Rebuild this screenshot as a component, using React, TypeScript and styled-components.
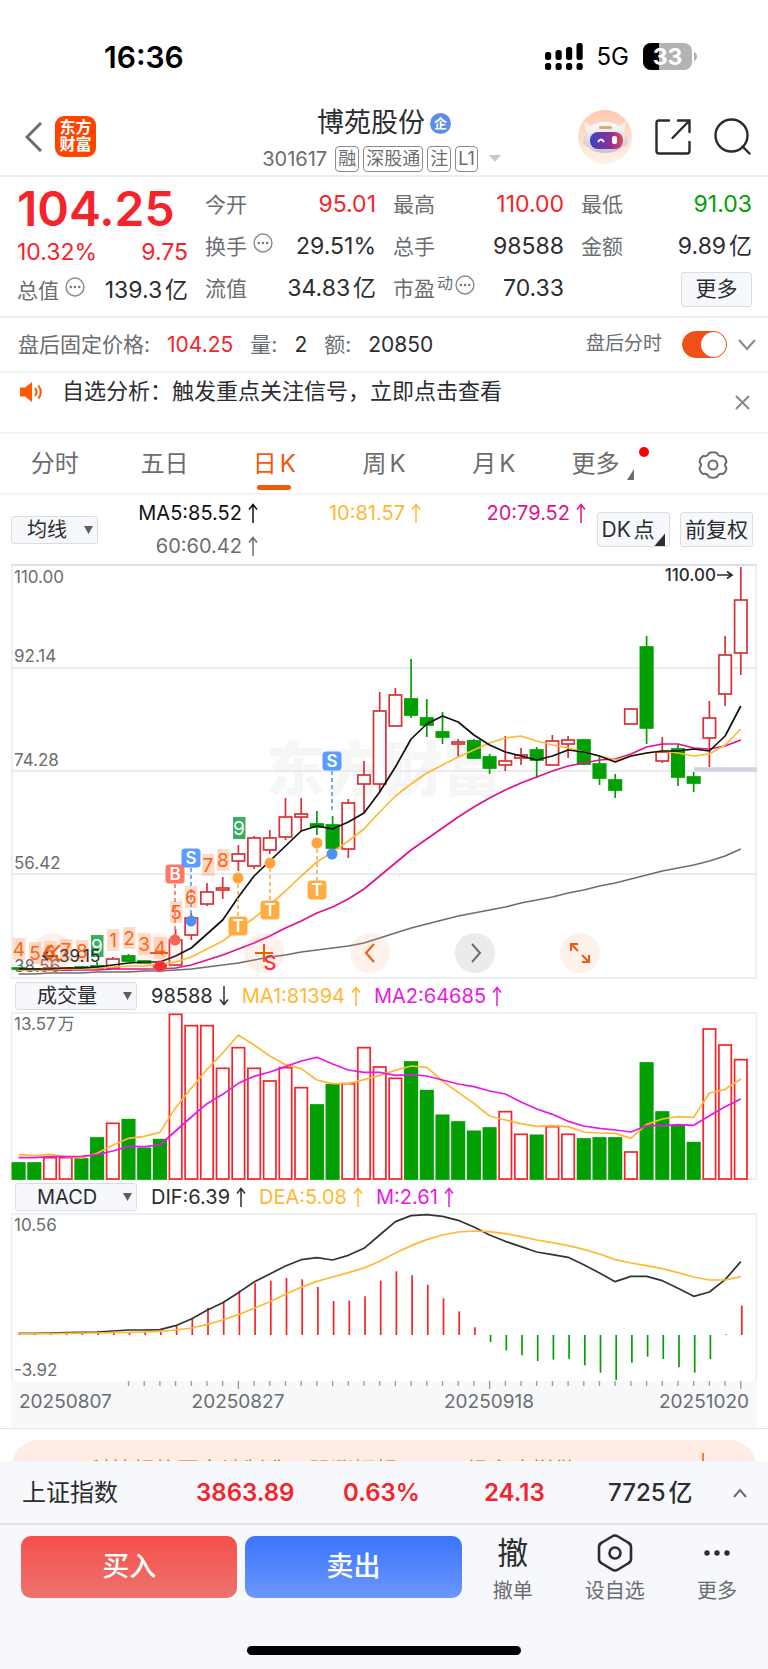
import React from "react";
import styled, { createGlobalStyle, css } from "styled-components";

const RED = "#f5242a";
const GREEN = "#02a002";
const ORANGE = "#f05a0a";
const GOLD = "#ffb833";
const PINK = "#e0128c";
const MAGENTA = "#e619e6";
const INK = "#2b2d31";
const GREY = "#6b6d70";

const Global = createGlobalStyle`
  * { box-sizing: border-box; }
  body { margin: 0; background: #fff; color: ${INK}; text-autospace: normal; }
  body, button, select, input { font-family: Inter, "Noto Sans CJK SC", sans-serif; line-height: 1.2; }
  button { cursor: pointer; padding: 0; border: 0; background: none; color: inherit; }
  svg { display: block; }
`;

const Page = styled.div`
  display: flex;
  flex-direction: column;
`;

/* ---------- status bar ---------- */
const StatusBar = styled.div`
  display: flex;
  align-items: center;
  justify-content: space-between;
  height: 100px;
  padding: 14px 71px 0 104px;
  color: #000;
`;
const Clock = styled.div`
  font-size: 30px;
  font-weight: 600;
`;
const StatusRight = styled.div`
  display: flex;
  align-items: center;
  gap: 14px;
  font-size: 24px;
`;

/* ---------- header ---------- */
const Header = styled.header`
  display: grid;
  grid-template-columns: 1fr auto 1fr;
  height: 77px;
  padding: 0 17px;
  border-bottom: 2px solid #ededed;
`;
const HeaderSide = styled.div<{ $end?: boolean }>`
  display: flex;
  align-items: center;
  gap: ${(p) => (p.$end ? "23px" : "13px")};
  justify-content: ${(p) => (p.$end ? "flex-end" : "flex-start")};
  padding-left: ${(p) => (p.$end ? 0 : 8)}px;
  padding-bottom: 2px;
`;
const AppLogo = styled.div`
  width: 41px;
  height: 41px;
  padding: 3px 0;
  border-radius: 9px;
  background: #ff4400;
  color: #fff;
  font-size: 16px;
  font-weight: 700;
  line-height: 17px;
  text-align: center;
`;
const TitleBlock = styled.div`
  display: flex;
  flex-direction: column;
  align-items: center;
  gap: 5px;
`;
const Title = styled.h1`
  display: flex;
  align-items: center;
  gap: 5px;
  margin: 5px 0 0;
  font-size: 27px;
  font-weight: 400;
  line-height: 36px;
`;
const CompanyBadge = styled.span`
  width: 21px;
  height: 21px;
  border-radius: 50%;
  background: #5b8def;
  color: #fff;
  font-size: 13px;
  font-weight: 700;
  line-height: 20px;
  text-align: center;
`;
const CodeRow = styled.div`
  display: flex;
  align-items: center;
  gap: 4px;
  color: ${GREY};
  font-size: 20px;
  line-height: 26px;
`;
const Code = styled.span`
  margin-right: 4px;
`;
const Tag = styled.span`
  height: 26px;
  padding: 0 2px;
  border: 1px solid #8b8b8b;
  border-radius: 4px;
  font-size: 18px;
  line-height: 24px;
`;

/* ---------- quote panel ---------- */
const Quote = styled.section`
  display: grid;
  grid-template-columns: repeat(4, 1fr);
  gap: 17px;
  padding: 7px 16px 6px 17px;
  border-bottom: 2px solid #ededed;
`;
const QuoteCol = styled.div`
  display: flex;
  flex-direction: column;
`;
const BigPrice = styled.div`
  color: ${RED};
  font-size: 48px;
  font-weight: 600;
  line-height: 50px;
`;
const toneColor = { up: RED, down: GREEN, plain: INK };
type Tone = keyof typeof toneColor;
const Stat = styled.div<{ $h?: number; $tone?: Tone }>`
  display: flex;
  align-items: center;
  justify-content: space-between;
  height: ${(p) => p.$h ?? 42}px;
  color: ${(p) => toneColor[p.$tone ?? "plain"]};
  font-size: 23px;
  white-space: nowrap;
`;
const StatLabel = styled.span`
  display: flex;
  align-items: center;
  gap: 2px;
  color: ${GREY};
  font-size: 21px;
  svg { margin: 0 0 8px 4px; }
  sup { font-size: 16px; line-height: 16px; margin-bottom: 12px; }
  sup + svg { margin-left: 0; }
`;
const Pill = styled.button<{ $w: number }>`
  display: inline-flex;
  flex: none;
  align-items: center;
  justify-content: center;
  width: ${(p) => p.$w}px;
  height: 35px;
  border: 1px solid #d9dde4;
  border-radius: 3px;
  background: #f6f8fb;
  color: ${INK};
  font-size: 21px;
  white-space: nowrap;
`;

/* ---------- strips ---------- */
const Strip = styled.section<{ $h: number }>`
  display: flex;
  align-items: center;
  height: ${(p) => p.$h}px;
  padding: 0 12px 0 18px;
  border-bottom: 2px solid #f4f4f4;
  color: ${GREY};
  font-size: 21px;
  white-space: nowrap;
`;
const StripValue = styled.span<{ $tone?: Tone }>`
  margin: 0 17px;
  color: ${(p) => toneColor[p.$tone ?? "plain"]};
`;
const ToggleLabel = styled.label`
  display: flex;
  align-items: center;
  gap: 20px;
  margin-left: auto;
  font-size: 19px;
`;
const Toggle = styled.input`
  appearance: none;
  display: flex;
  justify-content: flex-end;
  width: 45px;
  height: 27px;
  margin: 0 11px 0 0;
  border: 1px solid #f24f18;
  border-radius: 14px;
  background: #f24f18;
  &::before {
    content: "";
    width: 25px;
    height: 25px;
    border-radius: 50%;
    background: #fff;
  }
`;
const Notice = styled(Strip)`
  align-items: flex-start;
  padding: 3px 18px 0 19px;
  color: ${INK};
  font-size: 22px;
  line-height: 30px;
  gap: 19px;
  svg { flex: none; margin-top: 4px; }
  button { margin: 15px 0 0 auto; }
`;

/* ---------- tabs ---------- */
const Tabs = styled.nav`
  display: grid;
  grid-template-columns: repeat(7, 1fr);
  height: 61px;
  border-bottom: 2px solid #f4f4f4;
`;
const Tab = styled.button<{ $active?: boolean }>`
  position: relative;
  display: flex;
  align-items: center;
  justify-content: center;
  padding-top: 2px;
  color: ${(p) => (p.$active ? ORANGE : GREY)};
  font-size: 24px;
  ${(p) =>
    p.$active &&
    css`
      &::after {
        content: "";
        position: absolute;
        bottom: 3px;
        width: 34px;
        height: 5px;
        border-radius: 3px;
        background: ${ORANGE};
      }
    `}
`;
const NewDot = styled.span`
  position: absolute;
  top: 13px;
  left: 90px;
  width: 10px;
  height: 10px;
  border-radius: 50%;
  background: #f00;
`;
const Corner = styled.span<{ $size: number }>`
  align-self: flex-end;
  width: ${(p) => p.$size}px;
  height: ${(p) => p.$size + 2}px;
  background: currentColor;
  clip-path: polygon(100% 0, 100% 100%, 0 100%);
`;

/* ---------- indicator headers ---------- */
const MaHeader = styled.div`
  display: flex;
  align-items: center;
  gap: 10px;
  height: 69px;
  padding: 0 15px 0 11px;
`;
const MaLegend = styled.div`
  display: grid;
  grid-template-columns: 148fr 162fr 164fr;
  flex: 1;
  justify-items: end;
  line-height: 33px;
`;
const Reading = styled.span<{ $color: string }>`
  display: inline-flex;
  align-items: center;
  gap: 5px;
  color: ${(p) => p.$color};
  font-size: 20px;
  white-space: nowrap;
`;
const IndicatorHeader = styled.div`
  display: flex;
  align-items: center;
  gap: 12px;
  height: 33px;
  padding: 0 15px;
`;
const Picker = styled.label<{ $w: number; $indent: number }>`
  display: grid;
  grid-template-areas: "box";
  align-items: center;
  flex: none;
  width: ${(p) => p.$w}px;
  margin-right: 2px;
  select {
    grid-area: box;
    appearance: none;
    width: 100%;
    height: 28px;
    padding: 0 0 0 ${(p) => p.$indent}px;
    border: 1px solid #d9dde4;
    border-radius: 3px;
    background: #f6f8fb;
    color: ${INK};
    font-size: 20px;
    line-height: 26px;
  }
  svg {
    grid-area: box;
    justify-self: end;
    margin-right: 5px;
    pointer-events: none;
  }
`;

/* ---------- charts ---------- */
const ChartBox = styled.div`
  position: relative;
  margin: 0 11px;
  svg { width: 100%; height: auto; }
`;
const ChartControls = styled.div`
  position: absolute;
  left: 3%;
  bottom: 6px;
  width: 76%;
  display: flex;
  justify-content: space-between;
`;
const RoundButton = styled.button<{ $off?: boolean }>`
  display: grid;
  place-items: center;
  width: 40px;
  height: 40px;
  border-radius: 50%;
  background: ${(p) => (p.$off ? "#ebebeb" : "rgba(250, 150, 110, 0.14)")};
  color: ${(p) => (p.$off ? GREY : ORANGE)};
  svg { width: 28px; height: 28px; }
`;

/* ---------- banner and footer ---------- */
const BannerClip = styled.div`
  height: 33px;
  padding: 11px 11px 0;
  overflow: hidden;
  border-top: 1px solid #e4e4e4;
`;
const Banner = styled.a`
  display: flex;
  align-items: center;
  gap: 26px;
  height: 58px;
  padding: 3px 48px 0 30px;
  border-radius: 28px;
  background: #fdede4;
  color: ${ORANGE};
  font-size: 22px;
  text-decoration: none;
  white-space: nowrap;
  svg:last-child { margin: 0 0 5px auto; }
`;
const Footer = styled.footer`
  background: #f6f8fb;
`;
const IndexBar = styled.div`
  display: grid;
  grid-template-columns: 174fr 147fr 141fr 124fr 116fr 44fr;
  align-items: center;
  height: 64px;
  padding: 2px 0 0 22px;
  border-bottom: 2px solid #e2e2e4;
  font-size: 24px;
  white-space: nowrap;
`;
const IndexValue = styled.span<{ $tone?: Tone }>`
  color: ${(p) => toneColor[p.$tone ?? "plain"]};
  font-weight: ${(p) => (p.$tone ? 600 : 500)};
`;
const TradeRow = styled.div`
  display: flex;
  align-items: center;
  height: 84px;
  padding: 0 0 0 21px;
`;
const TradeButton = styled.button<{ $side: "buy" | "sell" }>`
  flex: 216;
  height: 62px;
  margin-right: ${(p) => (p.$side === "buy" ? 8 : 0)}px;
  border-radius: 10px;
  background: ${(p) =>
    p.$side === "buy" ? "linear-gradient(#f5504b, #ed736f)" : "linear-gradient(#3a75fb, #6b97ff)"};
  color: #fff;
  font-size: 27px;
  font-weight: 500;
`;
const Action = styled.button`
  display: flex;
  flex: 102;
  flex-direction: column;
  align-items: center;
  padding-top: 8px;
  color: ${GREY};
  font-size: 20px;
  line-height: 36px;
`;
const ActionIcon = styled.span`
  display: grid;
  place-items: center;
  height: 40px;
  color: ${INK};
  font-size: 31px;
`;
const HomeArea = styled.div`
  display: flex;
  justify-content: center;
  height: 60px;
  padding-top: 37px;
  &::after {
    content: "";
    width: 274px;
    height: 9px;
    border-radius: 5px;
    background: #000;
  }
`;

/* ---------- icons ---------- */
const InfoDots = () => (
  <svg width="20" height="20" viewBox="0 0 19 19" fill="none">
    <circle cx="9.500" cy="9.500" r="8.500" stroke="#8b8b8b" strokeWidth="1.400" />
    {[5.5, 9.5, 13.5].map((c) => <circle key={c} cx={c} cy="9.500" r="1.200" fill="#777" />)}
  </svg>
);
const Caret = () => (
  <svg width="9" height="9" viewBox="0 0 9 9"><path d="M0 1h9L4.500 9z" fill="#5c5e61" /></svg>
);
const Arrow = ({ down }: { down?: boolean }) => (
  <svg width="12" height="20" viewBox="0 0 12 20" fill="none" stroke="currentColor" strokeWidth="1.500">
    {down ? <path d="M6 0v19M2 13.500l4 5 4-5" /> : <path d="M6 20V1M2 6.500l4-5 4 5" />}
  </svg>
);
const Speaker = ({ size = 24 }: { size?: number }) => (
  <svg width={size} height={size} viewBox="0 0 24 24" fill="none">
    <path d="M1 7.500h5l7-5.500v20l-7-5.500H1z" fill="#ff5a00" />
    <path d="M16 8q3 4 0 8M19.500 5.500q4.500 6.500 0 13" stroke="#ff5a00" strokeWidth="2" />
  </svg>
);
const SignalIcon = () => (
  <svg width="38" height="28" viewBox="0 0 38 28">
    {[9, 7, 4, 0].map((y, i) => <rect key={y} x={i * 10.5} y={y} width="6.200" height={17 - y} rx="2.500" />)}
    {[0, 1, 2, 3].map((i) => <rect key={i} x={i * 10.5} y="20" width="6.200" height="7" rx="2.500" />)}
  </svg>
);
const BatteryIcon = () => (
  <svg width="54" height="27" viewBox="0 0 54 27">
    <rect width="49" height="27" rx="8" fill="#b3b3b3" />
    <path d="M16 0H8a8 8 0 0 0-8 8v11a8 8 0 0 0 8 8h8z" fill="#000" />
    <path d="M51 9q3 1 3 4.500t-3 4.500z" fill="#b3b3b3" />
    <text x="24.500" y="21.500" textAnchor="middle" fontSize="23" fontWeight="700" fill="#fff">33</text>
  </svg>
);
const BackIcon = () => (
  <svg width="17" height="30" viewBox="0 0 17 30" fill="none" stroke="#6b6b6b" strokeWidth="3">
    <path d="M16 1L2 15l14 14" />
  </svg>
);
const RobotIcon = () => (
  <svg width="54" height="54" viewBox="0 0 54 54">
    <defs>
      <linearGradient id="halo" x2="0" y2="1"><stop stopColor="#ffc9ae" /><stop offset="1" stopColor="#fff3ec" /></linearGradient>
      <linearGradient id="visor"><stop stopColor="#3c3fc4" /><stop offset=".6" stopColor="#8a2f9c" /><stop offset="1" stopColor="#e0485c" /></linearGradient>
      <linearGradient id="shell" x2="0" y2="1"><stop stopColor="#fff" /><stop offset="1" stopColor="#c9c5ca" /></linearGradient>
    </defs>
    <circle cx="27" cy="27" r="27" fill="url(#halo)" />
    <path d="M7 11q-2 6 3 13l8-8q-8 1-11-5zM47 11q2 6-3 13l-8-8q8 1 11-5z" fill="#f7efec" />
    <ellipse cx="9" cy="31" rx="4" ry="6" fill="#d9d5da" />
    <ellipse cx="46" cy="31" rx="4" ry="6" fill="#d9d5da" />
    <path d="M27 12c12 0 20 7 20 17 0 9-8 14-20 14S8 38 8 29c0-10 7-17 19-17z" fill="url(#shell)" />
    <rect x="21" y="16" width="13" height="3" rx="1.500" fill="#e9a468" />
    <rect x="12" y="22" width="33" height="17" rx="8" fill="url(#visor)" />
    <path d="M20 32q3-5 6 0" fill="none" stroke="#fff" strokeWidth="2" />
    <rect x="34" y="26" width="5" height="8" rx="2" fill="#fff" />
  </svg>
);
const ShareIcon = () => (
  <svg width="36" height="36" viewBox="0 0 36 36" fill="none" stroke="#2b2b2b" strokeWidth="2.400" strokeLinecap="round">
    <path d="M14 1.500H4Q1.500 1.500 1.500 4v28q0 2.500 2.500 2.500h28q2.500 0 2.500-2.500V23M23 1.500h11.500V13M34 2L17.500 19" />
  </svg>
);
const SearchIcon = () => (
  <svg width="37" height="37" viewBox="0 0 37 37" fill="none" stroke="#2b2b2b" strokeWidth="2.400" strokeLinecap="round">
    <circle cx="17.500" cy="17.500" r="16" /><path d="M28.500 28.500l7 7" />
  </svg>
);
const GearIcon = () => (
  <svg width="30" height="28" viewBox="0 0 30 28" fill="none" stroke={GREY} strokeWidth="2" strokeLinejoin="round">
    <path d="M11 2Q15 .500 19 2q1.500 4 6 3 3 2 3.500 6-3 3 0 6-.500 4-3.500 6-4.500-1-6 3-4 1.500-8 0-1.500-4-6-3-3-2-3.500-6 3-3 0-6Q2 7 5 5q4.500 1 6-3z" />
    <circle cx="15" cy="14" r="4.500" />
  </svg>
);
const Chevron = ({ d, w, h, color = GREY }: { d: string; w: number; h: number; color?: string }) => (
  <svg width={w} height={h} viewBox={`0 0 ${w} ${h}`} fill="none" stroke={color} strokeWidth="2"><path d={d} /></svg>
);

/* ---------- chart data: one entry per trading day ---------- */
const dayX = (i: number) => 18.6 + i * 15.7;

/* day, high, body top, body bottom, low, rising */
const candles: [number, number, number, number, number, 0 | 1][] = [
  [0, 968, 968, 969, 969, 0], [1, 969, 969, 970, 970, 0], [2, 967, 968, 970, 970, 1], [3, 967, 968, 970, 970, 1],
  [4, 966, 967, 968, 969, 0], [5, 962, 966, 968, 968, 0], [6, 957, 959, 968, 968, 1], [7, 954, 956, 961, 962, 0],
  [8, 960, 961, 963, 963, 0], [9, 963, 965, 967, 967, 1], [10, 929, 940, 965, 965, 1], [11, 913, 918, 935, 940, 1],
  [12, 883, 892, 904, 906, 1], [13, 877, 888, 890, 899, 1], [14, 845, 854, 861, 871, 1], [15, 836, 838, 866, 869, 1],
  [16, 830, 838, 850, 854, 1], [17, 798, 817, 837, 840, 1], [18, 798, 814, 817, 831, 1], [19, 811, 824, 827, 835, 0],
  [20, 816, 825, 848, 856, 0], [21, 799, 803, 849, 858, 1], [22, 761, 775, 784, 812, 1], [23, 692, 711, 784, 792, 1],
  [24, 688, 695, 726, 726, 1], [25, 659, 699, 715, 718, 0], [26, 699, 718, 725, 737, 0], [27, 712, 732, 737, 744, 0],
  [28, 739, 742, 744, 757, 1], [29, 739, 741, 758, 759, 0], [30, 754, 757, 768, 774, 0], [31, 736, 761, 765, 771, 1],
  [32, 748, 755, 758, 765, 1], [33, 747, 750, 760, 778, 0], [34, 735, 741, 765, 765, 1], [35, 736, 740, 744, 758, 1],
  [36, 740, 740, 764, 765, 0], [37, 756, 764, 778, 785, 0], [38, 774, 780, 790, 798, 0], [39, 709, 709, 724, 724, 1],
  [40, 636, 647, 728, 744, 0], [41, 737, 752, 761, 763, 1], [42, 745, 749, 777, 786, 0], [43, 772, 777, 783, 792, 0],
  [44, 701, 718, 738, 767, 1], [45, 636, 655, 694, 706, 1], [46, 567, 600, 653, 675, 1],
];
const ma5 = [969, 969, 969, 968, 968, 967, 965, 963, 962, 962, 956, 948, 934, 920, 897, 876, 861, 846, 831, 826, 829, 822, 813, 792, 767, 739, 724, 716, 722, 735, 745, 752, 756, 760, 756, 750, 752, 756, 762, 756, 753, 751, 751, 749, 751, 736, 706];
const ma10 = [970, 970, 970, 969, 969, 968, 967, 966, 966, 964, 962, 957, 949, 941, 929, 918, 905, 891, 876, 862, 852, 841, 829, 812, 796, 784, 773, 765, 757, 750, 743, 738, 736, 741, 745, 748, 752, 756, 760, 756, 753, 751, 753, 756, 754, 745, 729];
const ma20 = [970, 970, 970, 970, 970, 970, 969, 969, 969, 969, 968, 965, 960, 955, 949, 943, 936, 928, 921, 913, 907, 899, 889, 876, 863, 850, 839, 828, 817, 807, 798, 790, 783, 777, 771, 766, 763, 760, 759, 754, 747, 744, 744, 748, 749, 746, 740];
const ma60 = [974, 974, 973, 973, 973, 972, 972, 972, 971, 971, 970, 969, 967, 965, 963, 960, 957, 955, 952, 950, 948, 946, 943, 938, 933, 928, 924, 920, 916, 913, 910, 907, 903, 900, 897, 893, 890, 886, 883, 879, 875, 871, 868, 865, 861, 856, 849];

const volume = [546, 546, 530, 530, 534, 471, 427, 416, 502, 476, 100, 134, 134, 262, 200, 262, 300, 260, 320, 372, 311, 308, 200, 258, 292, 243, 329, 403, 423, 451, 441, 392, 460, 463, 437, 460, 474, 471, 471, 513, 246, 393, 434, 485, 144, 192, 236];
const fallingVolume = [0, 1, 4, 5, 7, 8, 9, 19, 20, 25, 26, 27, 28, 29, 30, 33, 36, 37, 38, 40, 41, 42, 43];
const volMa1 = [524, 527, 523, 530, 534, 520, 496, 475, 469, 457, 383, 325, 268, 219, 165, 195, 228, 254, 266, 300, 311, 311, 299, 286, 271, 258, 262, 303, 337, 370, 408, 420, 431, 439, 437, 440, 456, 459, 460, 475, 433, 417, 410, 412, 339, 328, 297];
const volMa2 = [533, 533, 530, 530, 529, 524, 513, 499, 500, 495, 453, 411, 371, 343, 310, 289, 276, 260, 243, 232, 252, 270, 277, 277, 286, 284, 288, 300, 312, 320, 333, 342, 366, 387, 403, 424, 438, 445, 450, 456, 437, 437, 434, 436, 407, 380, 357];
const dif = [460, 460, 459, 458, 457, 456, 453, 450, 450, 449, 437, 417, 391, 368, 338, 306, 282, 258, 239, 233, 240, 226, 205, 165, 125, 107, 104, 109, 121, 141, 165, 184, 200, 216, 224, 232, 254, 279, 305, 289, 289, 302, 325, 349, 336, 299, 245];
const dea = [461, 461, 461, 460, 459, 459, 458, 457, 456, 454, 450, 444, 434, 420, 404, 385, 365, 343, 322, 304, 291, 278, 264, 244, 219, 197, 179, 165, 156, 153, 155, 161, 170, 180, 188, 197, 208, 222, 239, 249, 257, 266, 278, 291, 300, 300, 290];
const macd = [461, 461, 460, 460, 460, 459, 458, 457, 455, 453, 437, 417, 383, 365, 332, 310, 302, 294, 298, 321, 363, 362, 349, 302, 274, 286, 314, 355, 394, 442, 486, 511, 526, 543, 539, 536, 556, 578, 600, 548, 530, 537, 562, 578, 537, 463, 377];

const volY = (v: number) => v / 3 - 32;
const macdY = (v: number) => v / 3 - 33;
const line = (values: number[], y: (v: number) => number = (v) => v) =>
  values.map((v, i) => `${dayX(i)},${y(v)}`).join(" ");

const Line = ({ points, color }: { points: string; color: string }) => (
  <polyline points={points} fill="none" stroke={color} strokeWidth="1.700" strokeLinejoin="round" />
);

const counts: [string, number, number][] = [
  ["4", 19, 949], ["5", 35, 953], ["6", 50, 952], ["7", 66, 950], ["8", 82, 951], ["9", 97, 946], ["1", 113, 940],
  ["2", 129, 938], ["3", 144, 944], ["4", 160, 948], ["5", 176, 912], ["6", 191, 897], ["7", 208, 865], ["8", 223, 860], ["9", 239, 828],
];
const badges: [string, number, number, string][] = [
  ["B", 175, 874, "#ff7566"], ["S", 191, 858, "#5a9cff"], ["S", 332, 761, "#5a9cff"],
  ["T", 238, 926, "#ffad42"], ["T", 270, 910, "#ffad42"], ["T", 317, 890, "#ffad42"],
];
const dots: [number, number, string][] = [
  [238, 878, "#ffa43a"], [270, 863, "#ffa43a"], [317, 843, "#ffa43a"], [191, 921, "#4a90f5"], [332, 854, "#4a90f5"], [175, 940, "#fa6055"], [160, 966, "#f5202a"],
];
const stems: [number, number, number, string][] = [
  [175, 884, 936, "#fa6055"], [191, 868, 918, "#4a90f5"], [332, 771, 811, "#4a90f5"],
  [238, 884, 917, "#ffa43a"], [270, 868, 901, "#ffa43a"], [317, 849, 881, "#ffa43a"],
];

const PriceChart = () => (
  <svg viewBox="11 564 746 415" role="img" aria-label="日K线图">
    <text x="384" y="791" fontSize="59" fontWeight="900" textAnchor="middle" fill="#f6f6f7">东方财富</text>
    <path d="M11 668H757M11 771H757M11 874H757" stroke="#e8ebf0" strokeWidth="2" />
    <path d="M12 564V978H756V564" fill="none" stroke="#e8ebf0" strokeWidth="1.500" />
    <path d="M11 565H757" stroke="#dfe2e8" strokeWidth="2" />
    <path d="M694 769.500H757" stroke="#d0d4dc" strokeWidth="4.500" />
    <g fill={GREY} fontSize="17">
      <text x="14" y="583">110.00</text>
      <text x="14" y="662">92.14</text>
      <text x="14" y="766">74.28</text>
      <text x="14" y="869">56.42</text>
      <text x="14" y="972">38.56</text>
    </g>
    {candles.map(([i, high, top, bottom, low, up]) => {
      const color = up ? "#d63238" : GREEN;
      return (
        <g key={i} stroke={color} strokeWidth="1.700">
          <path d={`M${dayX(i)} ${high}V${top}M${dayX(i)} ${bottom}V${low}`} />
          <rect x={dayX(i) - 6.2} y={top} width="12.400" height={bottom - top} fill={up ? "#fff" : color} />
        </g>
      );
    })}
    <Line points={line(ma60)} color="#6e6e6e" />
    <Line points={line(ma20)} color={PINK} />
    <Line points={line(ma10)} color={GOLD} />
    <Line points={line(ma5)} color="#111" />
    {stems.map(([x, y1, y2, color]) => (
      <path key={x} d={`M${x} ${y1}V${y2}`} stroke={color} strokeWidth="1.500" strokeDasharray="4 3" />
    ))}
    {dots.map(([x, y, color]) => <circle key={x} cx={x} cy={y} r="5.500" fill={color} />)}
    {counts.map(([label, x, y]) => (
      <g key={x}>
        <rect x={x - 6} y={y - 11} width="12.500" height="22" fill={label === "9" ? "#3aaf60" : "rgba(255,140,80,.3)"} />
        <text x={x} y={y + 7} fontSize="19" textAnchor="middle" fill={label === "9" ? "#fff" : "#ff6212"}>{label}</text>
      </g>
    ))}
    {badges.map(([label, x, y, color]) => (
      <g key={x}>
        <rect x={x - 9.5} y={y - 9.5} width="19" height="19" rx="3.500" fill={color} />
        <text x={x} y={y + 6} fontSize="17" fontWeight="600" textAnchor="middle" fill="#fff">{label}</text>
      </g>
    ))}
    <path d="M58 956H43M48 952L43 956L48 960" fill="none" stroke={INK} strokeWidth="1.700" />
    <text x="59" y="962" fontSize="17" fill={INK}>39.15</text>
    <text x="270" y="970" fontSize="20" fontWeight="500" textAnchor="middle" fill={RED}>S</text>
    <text x="716" y="581" fontSize="17" fontWeight="500" textAnchor="end" fill={INK}>110.00</text>
    <path d="M717 575H732M727 571.500L732 575L727 578.500" fill="none" stroke={INK} strokeWidth="1.700" />
  </svg>
);

const VolumeChart = () => (
  <svg viewBox="11 0 746 168" role="img" aria-label="成交量">
    <rect x="11.500" y="1" width="745" height="166.500" fill="none" stroke="#e8ebf0" strokeWidth="1.500" />
    <text x="14" y="18" fontSize="17" fill={GREY}>13.57万</text>
    {volume.map((v, i) => {
      const down = fallingVolume.includes(i);
      return (
        <rect key={i} x={dayX(i) - 6.2} y={volY(v) + 1} width="12.400" height={166 - volY(v)}
          fill={down ? GREEN : "#fff"} stroke={down ? GREEN : RED} strokeWidth="1.700" />
      );
    })}
    <Line points={line(volMa1, volY)} color={GOLD} />
    <Line points={line(volMa2, volY)} color={MAGENTA} />
  </svg>
);

const MacdChart = () => (
  <svg viewBox="11 0 746 215" role="img" aria-label="MACD">
    <rect x="11.500" y="1" width="745" height="168" fill="none" stroke="#e8ebf0" strokeWidth="1.500" />
    <rect x="11" y="168" width="746" height="47" fill="#f7f8fa" />
    <text x="14" y="18" fontSize="17" fill={GREY}>10.56</text>
    <text x="14" y="163" fontSize="17" fill={GREY}>-3.92</text>
    {macd.map((v, i) => (
      <path key={i} d={`M${dayX(i) + 1} 122V${macdY(v)}`} stroke={v > 465 ? GREEN : RED} strokeWidth="1.700" />
    ))}
    <Line points={line(dif, macdY)} color="#333" />
    <Line points={line(dea, macdY)} color={GOLD} />
    {dif.map((_, i) =>
      i < 7 ? null : (
        <path key={i} d={`M${dayX(i)} 168v${[14, 30, 46].includes(i) ? 8 : 5}`} stroke="#999" strokeWidth="1.300" />
      )
    )}
    <g fill={GREY} fontSize="19">
      <text x="19" y="195">20250807</text>
      <text x="238" y="195" textAnchor="middle">20250827</text>
      <text x="489" y="195" textAnchor="middle">20250918</text>
      <text x="749" y="195" textAnchor="end">20251020</text>
    </g>
  </svg>
);

const Read = ({ color, down, children }: { color: string; down?: boolean; children: React.ReactNode }) => (
  <Reading $color={color}>{children}<Arrow down={down} /></Reading>
);

export default function App() {
  return (
    <Page>
      <Global />
      <StatusBar>
        <Clock>16:36</Clock>
        <StatusRight><SignalIcon />5G<BatteryIcon /></StatusRight>
      </StatusBar>

      <Header>
        <HeaderSide>
          <button aria-label="返回"><BackIcon /></button>
          <AppLogo>东方<br />财富</AppLogo>
        </HeaderSide>
        <TitleBlock>
          <Title>博苑股份<CompanyBadge>企</CompanyBadge></Title>
          <CodeRow>
            <Code>301617</Code><Tag>融</Tag><Tag>深股通</Tag><Tag>注</Tag><Tag>L1</Tag>
            <svg width="24" height="8" viewBox="0 0 24 8"><path d="M7 0h12l-6 7z" fill="#c8c8c8" /></svg>
          </CodeRow>
        </TitleBlock>
        <HeaderSide $end>
          <button aria-label="智能助手"><RobotIcon /></button>
          <button aria-label="分享"><ShareIcon /></button>
          <button aria-label="搜索"><SearchIcon /></button>
        </HeaderSide>
      </Header>

      <Quote>
        <QuoteCol>
          <BigPrice>104.25</BigPrice>
          <Stat $h={38} $tone="up"><span>10.32%</span><span>9.75</span></Stat>
          <Stat $h={38}><StatLabel>总值<InfoDots /></StatLabel>139.3亿</Stat>
        </QuoteCol>
        <QuoteCol>
          <Stat $tone="up"><StatLabel>今开</StatLabel>95.01</Stat>
          <Stat><StatLabel>换手<InfoDots /></StatLabel>29.51%</Stat>
          <Stat><StatLabel>流值</StatLabel>34.83亿</Stat>
        </QuoteCol>
        <QuoteCol>
          <Stat $tone="up"><StatLabel>最高</StatLabel>110.00</Stat>
          <Stat><StatLabel>总手</StatLabel>98588</Stat>
          <Stat><StatLabel>市盈<sup>动</sup><InfoDots /></StatLabel>70.33</Stat>
        </QuoteCol>
        <QuoteCol>
          <Stat $tone="down"><StatLabel>最低</StatLabel>91.03</Stat>
          <Stat><StatLabel>金额</StatLabel>9.89亿</Stat>
          <Stat><span /><Pill $w={71}>更多</Pill></Stat>
        </QuoteCol>
      </Quote>

      <Strip $h={55}>
        盘后固定价格:<StripValue $tone="up">104.25</StripValue>
        量:<StripValue>2</StripValue>
        额:<StripValue>20850</StripValue>
        <ToggleLabel>盘后分时<Toggle type="checkbox" defaultChecked /></ToggleLabel>
        <button aria-label="展开"><Chevron w={18} h={12} d="M1 1l8 9 8-9" color="#888" /></button>
      </Strip>

      <Notice $h={61}>
        <Speaker />
        自选分析：触发重点关注信号，立即点击查看
        <button aria-label="关闭"><Chevron w={15} h={15} d="M1 1l13 13M14 1L1 14" color="#888" /></button>
      </Notice>

      <Tabs>
        <Tab>分时</Tab>
        <Tab>五日</Tab>
        <Tab $active>日K</Tab>
        <Tab>周K</Tab>
        <Tab>月K</Tab>
        <Tab>更多<NewDot /><svg width="16" height="30" viewBox="0 0 16 30"><path d="M15 19v11H8z" fill={GREY} /></svg></Tab>
        <Tab aria-label="设置"><GearIcon /></Tab>
      </Tabs>

      <MaHeader>
        <Picker $w={87} $indent={15}>
          <select aria-label="主图指标"><option>均线</option></select><Caret />
        </Picker>
        <MaLegend>
          <Read color="#111">MA5:85.52</Read>
          <Read color={GOLD}>10:81.57</Read>
          <Read color={PINK}>20:79.52</Read>
          <Read color={GREY}>60:60.42</Read>
        </MaLegend>
        <Pill $w={73}>DK点<Corner $size={11} /></Pill>
        <Pill $w={73}>前复权</Pill>
      </MaHeader>

      <ChartBox>
        <PriceChart />
        <ChartControls>
          <RoundButton aria-label="最早"><svg viewBox="0 0 28 28" fill="none" stroke="currentColor" strokeWidth="2"><path d="M13 6l-8 8 8 8M21 6l-8 8 8 8" /></svg></RoundButton>
          <RoundButton aria-label="缩小"><svg viewBox="0 0 28 28" stroke="currentColor" strokeWidth="2"><path d="M5 14h18" /></svg></RoundButton>
          <RoundButton aria-label="放大"><svg viewBox="0 0 28 28" stroke="currentColor" strokeWidth="2"><path d="M5 14h18M14 5v18" /></svg></RoundButton>
          <RoundButton aria-label="前移"><svg viewBox="0 0 28 28" fill="none" stroke="currentColor" strokeWidth="2"><path d="M18 5l-8 9 8 9" /></svg></RoundButton>
          <RoundButton $off aria-label="后移"><svg viewBox="0 0 28 28" fill="none" stroke="currentColor" strokeWidth="2"><path d="M11 5l8 9-8 9" /></svg></RoundButton>
          <RoundButton aria-label="全屏"><svg viewBox="0 0 28 28" fill="none" stroke="currentColor" strokeWidth="2"><path d="M5 12V5h7M5 5l7 7M23 16v7h-7M23 23l-7-7" /></svg></RoundButton>
        </ChartControls>
      </ChartBox>

      <IndicatorHeader>
        <Picker $w={122} $indent={21}>
          <select aria-label="副图指标一"><option>成交量</option></select><Caret />
        </Picker>
        <Read color={INK} down>98588</Read>
        <Read color={GOLD}>MA1:81394</Read>
        <Read color={MAGENTA}>MA2:64685</Read>
      </IndicatorHeader>
      <ChartBox><VolumeChart /></ChartBox>

      <IndicatorHeader>
        <Picker $w={122} $indent={21}>
          <select aria-label="副图指标二"><option>MACD</option></select><Caret />
        </Picker>
        <Read color={INK}>DIF:6.39</Read>
        <Read color={GOLD}>DEA:5.08</Read>
        <Read color={MAGENTA}>M:2.61</Read>
      </IndicatorHeader>
      <ChartBox><MacdChart /></ChartBox>

      <BannerClip>
        <Banner href="#">
          <Speaker size={22} />
          科技规格国家端制造！股涨幅超 107% 组合这样做
          <svg width="12" height="30" viewBox="0 0 12 30"><path d="M6 0v30" stroke={ORANGE} strokeWidth="1.500" /></svg>
        </Banner>
      </BannerClip>

      <Footer>
        <IndexBar>
          <span>上证指数</span>
          <IndexValue $tone="up">3863.89</IndexValue>
          <IndexValue $tone="up">0.63%</IndexValue>
          <IndexValue $tone="up">24.13</IndexValue>
          <IndexValue>7725亿</IndexValue>
          <button aria-label="展开指数"><Chevron w={44} h={10} d="M10 9l6-7 6 7" /></button>
        </IndexBar>
        <TradeRow>
          <TradeButton $side="buy">买入</TradeButton>
          <TradeButton $side="sell">卖出</TradeButton>
          <Action><ActionIcon>撤</ActionIcon>撤单</Action>
          <Action>
            <ActionIcon>
              <svg width="36" height="38" viewBox="0 0 36 38" fill="none" stroke="currentColor" strokeWidth="2.600" strokeLinejoin="round">
                <path d="M18 1.500q1.500 0 3 1l10 6q3 1.500 3 4.500v12q0 3-3 4.500l-10 6q-3 2-6 0l-10-6q-3-1.500-3-4.500V13q0-3 3-4.500l10-6q1.500-1 3-1z" />
                <circle cx="18" cy="19" r="5.500" />
              </svg>
            </ActionIcon>
            设自选
          </Action>
          <Action>
            <ActionIcon>
              <svg width="28" height="8" viewBox="0 0 28 8" fill="currentColor">
                <circle cx="4" cy="4" r="2.700" /><circle cx="14" cy="4" r="2.700" /><circle cx="24" cy="4" r="2.700" />
              </svg>
            </ActionIcon>
            更多
          </Action>
        </TradeRow>
        <HomeArea />
      </Footer>
    </Page>
  );
}
